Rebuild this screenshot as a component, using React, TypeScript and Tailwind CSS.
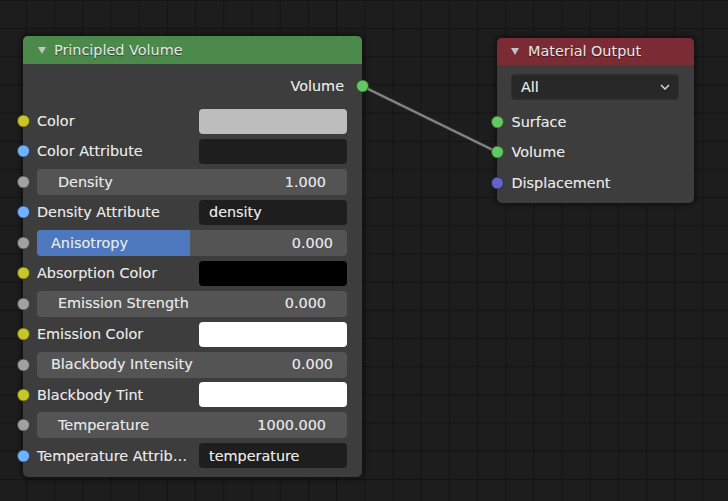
import React from "react";

type Row =
  | { kind: "color"; label: string; socket: string; swatch: string }
  | { kind: "string"; label: string; socket: string; value: string }
  | { kind: "slider"; label: string; socket: string; value: string; pad: "a" | "b"; fill?: boolean };

const YELLOW = "bg-[#c7c729]";
const BLUE = "bg-[#70b2ff]";
const GRAY = "bg-[#a1a1a1]";

const rows: Row[] = [
  { kind: "color", label: "Color", socket: YELLOW, swatch: "bg-[#bdbdbd]" },
  { kind: "string", label: "Color Attribute", socket: BLUE, value: "" },
  { kind: "slider", label: "Density", socket: GRAY, value: "1.000", pad: "b" },
  { kind: "string", label: "Density Attribute", socket: BLUE, value: "density" },
  { kind: "slider", label: "Anisotropy", socket: GRAY, value: "0.000", pad: "a", fill: true },
  { kind: "color", label: "Absorption Color", socket: YELLOW, swatch: "bg-[#000000]" },
  { kind: "slider", label: "Emission Strength", socket: GRAY, value: "0.000", pad: "b" },
  { kind: "color", label: "Emission Color", socket: YELLOW, swatch: "bg-[#ffffff]" },
  { kind: "slider", label: "Blackbody Intensity", socket: GRAY, value: "0.000", pad: "a" },
  { kind: "color", label: "Blackbody Tint", socket: YELLOW, swatch: "bg-[#ffffff]" },
  { kind: "slider", label: "Temperature", socket: GRAY, value: "1000.000", pad: "b" },
  { kind: "string", label: "Temperature Attrib…", socket: BLUE, value: "temperature" },
];

function Socket({ color, side }: { color: string; side: "left" | "right" }) {
  return (
    <span
      className={`absolute top-1/2 -translate-y-1/2 w-[13px] h-[13px] rounded-full border border-[rgba(0,0,0,0.55)] ${color} ${
        side === "left" ? "left-[-6.5px]" : "right-[-6.5px]"
      }`}
    />
  );
}

function Triangle() {
  return (
    <svg width="8" height="7" viewBox="0 0 8 7" className="shrink-0">
      <polygon points="0,0 8,0 4,7" fill="#c4c4c4" />
    </svg>
  );
}

function InputRow({ row }: { row: Row }) {
  return (
    <div className="relative h-[30.45px] flex items-center pl-[14px] pr-[15px]">
      <Socket color={row.socket} side="left" />
      {row.kind === "slider" ? (
        <div className="relative w-full h-[26px] rounded-[4px] bg-[#545454] overflow-hidden">
          {row.fill && <div className="absolute left-0 top-0 bottom-0 w-[153px] bg-[#4d78be]" />}
          <div
            className={`relative h-full flex items-center justify-between ${
              row.pad === "a" ? "px-[14px]" : "px-[21px]"
            }`}
          >
            <span>{row.label}</span>
            <span>{row.value}</span>
          </div>
        </div>
      ) : (
        <>
          <span className="whitespace-nowrap">{row.label}</span>
          {row.kind === "color" ? (
            <div className={`ml-auto w-[148px] h-[25px] rounded-[4px] ${row.swatch}`} />
          ) : (
            <div className="ml-auto w-[148px] h-[25px] rounded-[4px] bg-[#1e1e1e] flex items-center pl-[10px]">
              {row.value}
            </div>
          )}
        </>
      )}
    </div>
  );
}

export default function App() {
  return (
    <div
      className="relative w-[728px] h-[501px] overflow-hidden bg-[#1d1d1d] bg-[linear-gradient(to_right,#141414_1px,transparent_1px),linear-gradient(to_bottom,#141414_1px,transparent_1px)] bg-[size:28.2px_28.2px] bg-[position:26px_28px] text-[14.4px] text-[#e6e6e6] leading-none [text-shadow:0_0_0.4px_rgba(230,230,230,0.6)]"
      style={{ fontFamily: '"DejaVu Sans", "Liberation Sans", sans-serif' }}
    >
      <svg className="absolute left-0 top-0" width="728" height="501">
        <line x1="362" y1="86" x2="497" y2="152" stroke="#262626" strokeWidth="4.5" />
        <line x1="362" y1="86" x2="497" y2="152" stroke="#858585" strokeWidth="2.5" />
      </svg>

      {/* Principled Volume */}
      <div className="absolute left-[23px] top-[36px] w-[339px] h-[441px] rounded-[5px] bg-[#3d3d3d] shadow-[0_0_5px_2px_rgba(0,0,0,0.45)] flex flex-col">
        <div className="h-[28px] shrink-0 rounded-t-[5px] bg-[#4b8a4a] flex items-center pl-[15px] gap-[8px] text-[#e8e8e8] [text-shadow:0_1px_1px_rgba(0,0,0,0.5)]">
          <Triangle />
          <span>Principled Volume</span>
        </div>
        <div className="pt-[7px]">
          <div className="relative h-[30px] flex items-center justify-end pr-[18px]">
            <span>Volume</span>
            <Socket color="bg-[#63c763]" side="right" />
          </div>
          <div className="mt-[4.8px]">
            {rows.map((r, i) => (
              <InputRow key={i} row={r} />
            ))}
          </div>
        </div>
      </div>

      {/* Material Output */}
      <div className="absolute left-[497px] top-[38px] w-[197px] h-[165px] rounded-[5px] bg-[#3d3d3d] shadow-[0_0_5px_2px_rgba(0,0,0,0.45)] flex flex-col">
        <div className="h-[27px] shrink-0 rounded-t-[5px] bg-[#7b2b33] flex items-center pl-[14px] gap-[9px] text-[#e8e8e8] [text-shadow:0_1px_1px_rgba(0,0,0,0.5)]">
          <Triangle />
          <span>Material Output</span>
        </div>
        <div className="pt-[9px]">
          <div className="ml-[14px] mr-[15px] h-[26px] rounded-[4px] bg-[#282828] border border-[#303030] flex items-center justify-between pl-[9px] pr-[8px]">
            <span>All</span>
            <svg width="10" height="6" viewBox="0 0 10 6">
              <polyline points="1,1 5,5 9,1" fill="none" stroke="#d6d6d6" strokeWidth="1.5" />
            </svg>
          </div>
          <div className="mt-[6.8px]">
            {[
              ["Surface", "bg-[#63c763]"],
              ["Volume", "bg-[#63c763]"],
              ["Displacement", "bg-[#6363c7]"],
            ].map(([l, c]) => (
              <div key={l} className="relative h-[30.45px] flex items-center pl-[14.5px]">
                <Socket color={c} side="left" />
                <span>{l}</span>
              </div>
            ))}
          </div>
        </div>
      </div>
    </div>
  );
}
